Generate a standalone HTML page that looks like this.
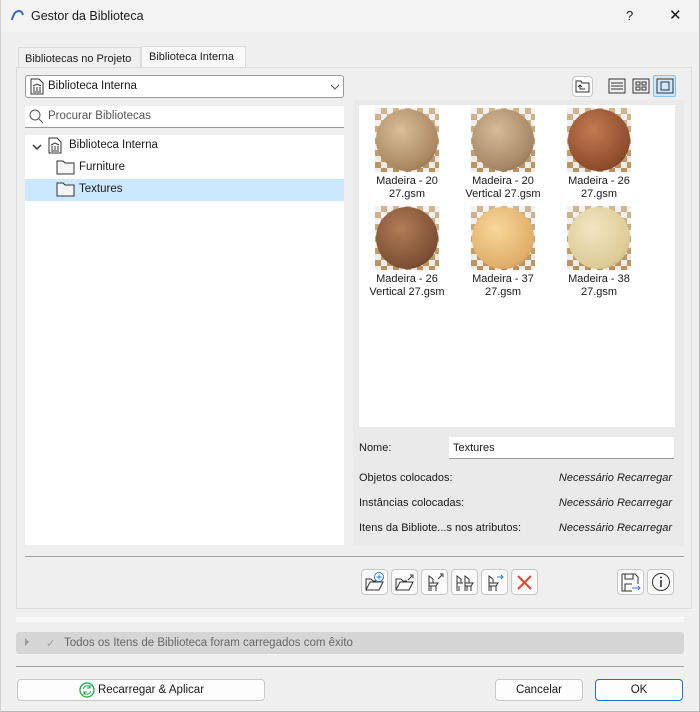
<!DOCTYPE html>
<html><head><meta charset="utf-8"><style>
*{box-sizing:border-box;margin:0;padding:0}
body{width:700px;height:712px;background:#f0f0f0;font-family:"Liberation Sans",sans-serif;font-size:11px;color:#1a1a1a;position:relative;overflow:hidden}
.a{position:absolute}
.title{left:0;top:0;width:700px;height:32px;background:#f3f3f3}
.btn{position:absolute;background:#fdfdfd;border:1px solid #c8c8c8;border-radius:4px;text-align:center;line-height:20px;font-size:11.5px}
.ib{position:absolute;top:569px;width:27px;height:26px;background:#fbfbfb;border:1px solid #c8c8c8;border-radius:4px}
.th{position:absolute;width:64px;height:64px;background:linear-gradient(180deg,rgba(255,255,255,.35),rgba(255,255,255,0)),repeating-conic-gradient(#b8915a 0 25%,#ecebe8 0 50%) 0 0/12px 12px;overflow:hidden}
.th div{position:absolute;left:1px;top:1px;width:62px;height:62px;border-radius:50%}
.lb{position:absolute;width:96px;text-align:center;font-size:11px;line-height:13px}
.row{position:absolute;left:359px;width:313px;font-size:11px}
.row i{position:absolute;right:0;top:0}
</style></head><body>
<div class="a title"></div>
<div class="a" style="left:0;top:0;width:700px;height:712px;border-right:1px solid #b8b8b8;border-bottom:1px solid #b8b8b8;border-left:1px solid #d0d0d0;pointer-events:none;z-index:5"></div>
<svg class="a" style="left:10px;top:9px" width="16" height="12"><path d="M2 11 Q4 2 9 2 Q12 2 13 6" stroke="#3a63c8" stroke-width="2" fill="none"/></svg>
<div class="a" style="left:31px;top:9px;font-size:12.5px">Gestor da Biblioteca</div>
<div class="a" style="left:626px;top:8px;font-size:13px">?</div>
<div class="a" style="left:669px;top:6px;font-size:15px">✕</div>

<div class="a" style="left:18px;top:47px;width:123px;height:21px;border:1px solid #dcdcdc;border-bottom:none;background:#f0f0f0;padding:5px 0 0 6px">Bibliotecas no Projeto</div>
<div class="a" style="left:141px;top:46px;width:105px;height:22px;border:1px solid #dcdcdc;border-bottom:none;background:#f9f9f9;padding:4px 0 0 7px">Biblioteca Interna</div>
<div class="a" style="left:16px;top:67px;width:676px;height:542px;border:1px solid #dcdcdc;background:#efefef"></div>

<div class="a" style="left:25px;top:75px;width:319px;height:23px;background:#fff;border:1px solid #9a9a9a;border-radius:3px"></div>
<svg class="a" style="left:30px;top:78px" width="14" height="17"><path d="M1 1h8l4 4v11H1z" fill="#fff" stroke="#333"/><path d="M3 8l4-2 4 2M4 9v4M7 9v4M10 9v4M3 14h8" stroke="#333" fill="none"/></svg>
<div class="a" style="left:48px;top:80px;font-size:11.5px">Biblioteca Interna</div>
<svg class="a" style="left:330px;top:84px" width="10" height="6"><path d="M1 1l4 4 4-4" stroke="#555" fill="none"/></svg>

<div class="a" style="left:25px;top:106px;width:319px;height:22px;background:#fff;border-bottom:1px solid #999"></div>
<svg class="a" style="left:29px;top:109px" width="15" height="15"><circle cx="6" cy="6" r="5" stroke="#555" fill="none"/><path d="M10 10l4 4" stroke="#555"/></svg>
<div class="a" style="left:48px;top:110px;color:#555;font-size:11.5px">Procurar Bibliotecas</div>

<div class="a" style="left:25px;top:135px;width:319px;height:410px;background:#fff"></div>
<div class="a" style="left:25px;top:179px;width:319px;height:22px;background:#cce8ff"></div>
<svg class="a" style="left:32px;top:143px" width="10" height="8"><path d="M1 2l4 4 4-4" stroke="#333" stroke-width="1.5" fill="none"/></svg>
<svg class="a" style="left:48px;top:137px" width="14" height="17"><path d="M1 1h8l4 4v11H1z" fill="#fff" stroke="#333"/><path d="M3 8l4-2 4 2M4 9v4M7 9v4M10 9v4M3 14h8" stroke="#333" fill="none"/></svg>
<div class="a" style="left:69px;top:139px;font-size:11.5px">Biblioteca Interna</div>
<svg class="a" style="left:56px;top:160px" width="19" height="15"><path d="M1 1h6l2 2h9v11H1z" fill="#f5f5f5" stroke="#333"/></svg>
<div class="a" style="left:79px;top:161px;font-size:11.5px">Furniture</div>
<svg class="a" style="left:56px;top:182px" width="19" height="15"><path d="M1 1h6l2 2h9v11H1z" fill="#f5f5f5" stroke="#333"/></svg>
<div class="a" style="left:79px;top:183px;font-size:11.5px">Textures</div>

<div class="btn" style="left:572px;top:76px;width:21px;height:21px"></div>
<svg class="a" style="left:575px;top:80px" width="15" height="13"><path d="M1 1h5l1 2h7v9H1z" fill="none" stroke="#333"/><path d="M5 5v4h5M3 7l2-2 2 2" stroke="#333" fill="none"/></svg>
<svg class="a" style="left:608px;top:78px" width="18" height="16"><rect x="1" y="1" width="16" height="14" fill="none" stroke="#333"/><path d="M3 5h12M3 8h12M3 11h12" stroke="#333"/></svg>
<svg class="a" style="left:632px;top:78px" width="18" height="16"><rect x="1" y="1" width="16" height="14" fill="none" stroke="#333"/><rect x="4" y="4" width="4" height="3" fill="none" stroke="#333"/><rect x="10" y="4" width="4" height="3" fill="none" stroke="#333"/><rect x="4" y="9" width="4" height="3" fill="none" stroke="#333"/><rect x="10" y="9" width="4" height="3" fill="none" stroke="#333"/></svg>
<div class="a" style="left:653px;top:75px;width:23px;height:22px;background:#cce8ff;border:1px solid #8cc2ef;border-radius:2px"></div>
<svg class="a" style="left:656px;top:78px" width="18" height="16"><rect x="1" y="1" width="16" height="14" fill="none" stroke="#333"/><rect x="5" y="4" width="8" height="8" fill="none" stroke="#333"/></svg>

<div class="a" style="left:353px;top:100px;width:331px;height:446px;background:#eaeaea"></div>
<div class="a" style="left:359px;top:105px;width:316px;height:322px;background:#fff"></div>
<div class="th" style="left:375px;top:108px"><div style="background:radial-gradient(circle at 40% 35%,#d9bf99,#a98660 70%,#6d5236)"></div></div>
<div class="th" style="left:471px;top:108px"><div style="background:radial-gradient(circle at 40% 35%,#d6bc98,#a58565 70%,#6a523a)"></div></div>
<div class="th" style="left:567px;top:108px"><div style="background:radial-gradient(circle at 40% 35%,#c27a52,#8e4c2c 70%,#4f2816)"></div></div>
<div class="th" style="left:375px;top:206px"><div style="background:radial-gradient(circle at 40% 35%,#b07c58,#7d4f33 70%,#45281a)"></div></div>
<div class="th" style="left:471px;top:206px"><div style="background:radial-gradient(circle at 40% 35%,#f8d79a,#e0ae68 70%,#a87638)"></div></div>
<div class="th" style="left:567px;top:206px"><div style="background:radial-gradient(circle at 40% 35%,#f1e6c2,#ddcb96 70%,#a8976a)"></div></div>
<div class="lb" style="left:359px;top:175px">Madeira - 20<br>27.gsm</div>
<div class="lb" style="left:455px;top:175px">Madeira - 20<br>Vertical 27.gsm</div>
<div class="lb" style="left:551px;top:175px">Madeira - 26<br>27.gsm</div>
<div class="lb" style="left:359px;top:273px">Madeira - 26<br>Vertical 27.gsm</div>
<div class="lb" style="left:455px;top:273px">Madeira - 37<br>27.gsm</div>
<div class="lb" style="left:551px;top:273px">Madeira - 38<br>27.gsm</div>

<div class="a" style="left:359px;top:442px">Nome:</div>
<div class="a" style="left:449px;top:437px;width:225px;height:22px;background:#fff;border-bottom:1px solid #999;padding:5px 0 0 4px">Textures</div>
<div class="row" style="top:472px">Objetos colocados:<i>Necessário Recarregar</i></div>
<div class="row" style="top:497px">Instâncias colocadas:<i>Necessário Recarregar</i></div>
<div class="row" style="top:522px">Itens da Bibliote...s nos atributos:<i>Necessário Recarregar</i></div>

<div class="a" style="left:25px;top:556px;width:659px;height:1px;background:#a0a0a0"></div>
<div class="ib" style="left:361px"></div><div class="ib" style="left:391px"></div><div class="ib" style="left:421px"></div><div class="ib" style="left:451px"></div><div class="ib" style="left:481px"></div><div class="ib" style="left:511px"></div><div class="ib" style="left:617px"></div><div class="ib" style="left:647px"></div>
<svg class="a" style="left:364px;top:571px" width="22" height="22"><path d="M2 19V8h5l2 2h3M2 19l4-8h13l-4 8z" fill="none" stroke="#333"/><circle cx="15" cy="6" r="4.5" fill="#fff" stroke="#2f7be0"/><path d="M15 3.5v5M12.5 6h5" stroke="#2f7be0"/></svg>
<svg class="a" style="left:394px;top:571px" width="22" height="22"><path d="M2 19V8h5l2 2h4M2 19l4-8h13l-4 8z" fill="none" stroke="#333"/><path d="M14 9l4-4M16 4h3v3" stroke="#333" fill="none"/></svg>
<svg class="a" style="left:424px;top:571px" width="22" height="22"><path d="M5 20V5l4 3v4M5 12h9l-2 3H5M7 15v5M12 15v5" fill="none" stroke="#333"/><path d="M14 8l4-4M16 3h3v3" stroke="#333" fill="none"/></svg>
<svg class="a" style="left:454px;top:571px" width="22" height="22"><path d="M3 20V5l4 3v4M3 12h6M5 15v5M11 20V5l4 3v4M11 12h8l-2 3h-6M13 15v5M17 15v5" fill="none" stroke="#333"/></svg>
<svg class="a" style="left:484px;top:571px" width="22" height="22"><path d="M5 20V5l4 3v4M5 12h9l-2 3H5M7 15v5M12 15v5" fill="none" stroke="#333"/><path d="M13 6h6M17 4l2 2-2 2" stroke="#2f7be0" fill="none"/></svg>
<svg class="a" style="left:515px;top:573px" width="19" height="19"><path d="M3 3l13 13M16 3L3 16" stroke="#e8432b" stroke-width="2"/></svg>
<svg class="a" style="left:620px;top:572px" width="22" height="22"><path d="M2 2h13l3 3v7M2 2v17h10" fill="none" stroke="#333"/><path d="M5 2v5h8V2M5 19v-7h7" fill="none" stroke="#333"/><path d="M12 16h8M18 14l2 2-2 2" stroke="#2f7be0" fill="none"/></svg>
<svg class="a" style="left:651px;top:572px" width="20" height="20"><circle cx="10" cy="10" r="8.5" fill="none" stroke="#333"/><path d="M10 8v7" stroke="#333" stroke-width="1.6"/><circle cx="10" cy="5.5" r="1" fill="#333"/></svg>

<div class="a" style="left:16px;top:617px;width:668px;height:5px;background:#f9f9f9"></div>
<div class="a" style="left:16px;top:632px;width:668px;height:22px;background:#d6d6d6;border-radius:3px"></div>
<div class="a" style="left:25px;top:638px;width:0;height:0;border-left:4px solid #999;border-top:4px solid transparent;border-bottom:4px solid transparent"></div>
<div class="a" style="left:46px;top:637px;color:#999;font-size:11px">✓</div>
<div class="a" style="left:64px;top:637px;color:#666;font-size:11.5px">Todos os Itens de Biblioteca foram carregados com êxito</div>
<div class="a" style="left:16px;top:666px;width:668px;height:1px;background:#a0a0a0"></div>

<div class="btn" style="left:17px;top:679px;width:248px;height:22px;padding-left:20px">Recarregar &amp; Aplicar</div>
<svg class="a" style="left:79px;top:682px" width="16" height="16"><circle cx="8" cy="8" r="7" fill="#fff" stroke="#1da84a" stroke-width="1.3"/><path d="M4.5 7a3.5 3.5 0 0 1 6.5-1.5M11.5 9a3.5 3.5 0 0 1-6.5 1.5M11 3v3H8M5 13v-3h3" stroke="#1da84a" fill="none"/></svg>
<div class="btn" style="left:495px;top:679px;width:88px;height:22px">Cancelar</div>
<div class="btn" style="left:595px;top:679px;width:88px;height:22px;border-color:#2b6cc4">OK</div>
</body></html>
